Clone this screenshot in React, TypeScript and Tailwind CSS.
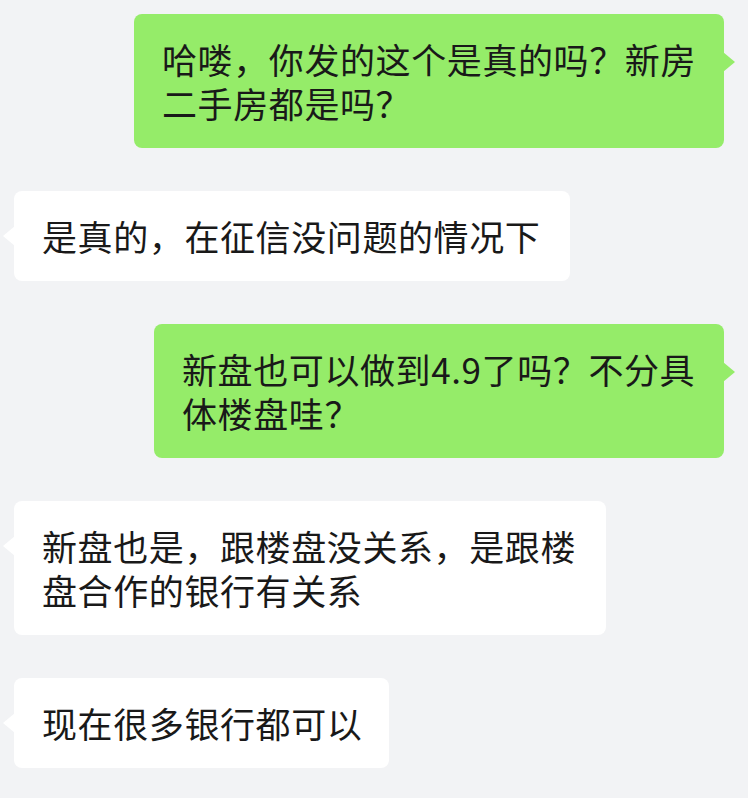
const MESSAGES = [
  { mine: true, width: 'w-[590px]', lines: ['哈喽，你发的这个是真的吗？新房', '二手房都是吗？'] },
  { mine: false, width: 'w-[556px]', lines: ['是真的，在征信没问题的情况下'] },
  { mine: true, width: 'w-[570px]', lines: ['新盘也可以做到4.9了吗？不分具', '体楼盘哇？'] },
  { mine: false, width: 'w-[592px]', lines: ['新盘也是，跟楼盘没关系，是跟楼', '盘合作的银行有关系'] },
  { mine: false, width: 'w-[375px]', lines: ['现在很多银行都可以'] },
]

function Bubble({ mine, width, lines }: { mine: boolean; width: string; lines: string[] }) {
  return (
    <div className={`relative ${width} rounded-lg pl-[28px] pr-4 py-[23px] ${mine ? 'bg-[#95ec69]' : 'bg-white'}`}>
      {/* tail */}
      {mine ? (
        <span className="absolute -right-[11px] top-[38px] w-0 h-0 border-y-[10px] border-y-transparent border-l-[12px] border-l-[#95ec69]" />
      ) : (
        <span className="absolute -left-[11px] top-[35px] w-0 h-0 border-y-[10px] border-y-transparent border-r-[12px] border-r-white" />
      )}
      {lines.map((line, i) => (
        <p key={i} className="whitespace-nowrap text-[35px] leading-[44px] tracking-[0.6px] text-[#191919]">
          {line}
        </p>
      ))}
    </div>
  )
}

export default function App() {
  return (
    <div
      className="w-[748px] h-[798px] overflow-hidden bg-[#f2f3f5] pt-[14px] flex flex-col gap-[43px]"
      style={{ fontFamily: '"Noto Sans CJK SC", "Noto Sans", sans-serif' }}
    >
      {MESSAGES.map((m, i) => (
        <div key={i} className={`flex ${m.mine ? 'justify-end pr-[24px]' : 'justify-start pl-[14px]'}`}>
          <Bubble {...m} />
        </div>
      ))}
    </div>
  )
}
